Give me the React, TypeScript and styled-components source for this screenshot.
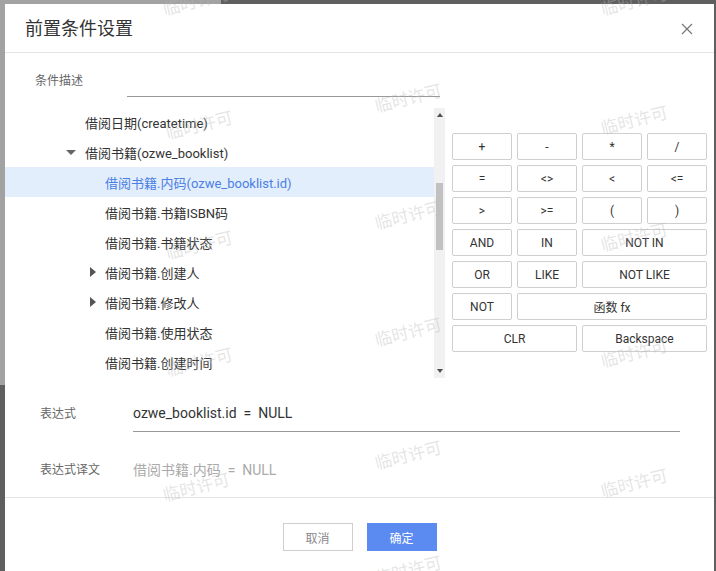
import React from "react";
import styled, { createGlobalStyle } from "styled-components";

const Global = createGlobalStyle`
  html, body { margin: 0; padding: 0; }
  body {
    width: 716px;
    height: 571px;
    overflow: hidden;
    font-family: Roboto, "Noto Sans CJK SC", sans-serif;
  }
`;

const Backdrop = styled.div`
  position: relative;
  width: 716px;
  height: 571px;
  overflow: hidden;
  background:
    linear-gradient(#a2a2a2, #a2a2a2) no-repeat 0 0 / 221px 385px,
    #5f5f5f;
  padding: 4px 2px 0 5px;
  box-sizing: border-box;
`;

const Dialog = styled.div`
  background: #fff;
  height: 600px;
  display: flex;
  flex-direction: column;
`;

const Header = styled.div`
  height: 48px;
  border-bottom: 1px solid #e4e4e4;
  display: flex;
  align-items: center;
  justify-content: space-between;
  padding: 0 20px 0 20px;
`;

const Title = styled.div`
  font-size: 18px;
  color: #333;
  line-height: 24px;
  padding-top: 2px;
`;

const CloseBtn = styled.div`
  width: 14px;
  height: 14px;
  display: flex;
  align-items: center;
  justify-content: center;
  margin-top: 2px;
`;

const DescRow = styled.div`
  display: flex;
  align-items: flex-start;
  padding: 20px 0 0 30px;
  margin-bottom: 10px;
`;

const Label = styled.div<{ $w: number }>`
  width: ${(p) => p.$w}px;
  font-size: 12px;
  color: #666;
  line-height: 16px;
`;

const DescInput = styled.div`
  width: 313px;
  height: 23px;
  border-bottom: 1px solid #999;
`;

const Main = styled.div`
  display: flex;
  height: 271px;
`;

const Tree = styled.div`
  width: 440px;
  height: 271px;
  display: flex;
  overflow: hidden;
`;

const TreeRows = styled.div`
  width: 429px;
  display: flex;
  flex-direction: column;
`;

const Row = styled.div<{ $level: number; $selected?: boolean }>`
  height: 30px;
  flex: none;
  display: flex;
  align-items: center;
  padding-left: ${(p) => 60 + (p.$level - 1) * 20}px;
  background: ${(p) => (p.$selected ? "#e3eefd" : "transparent")};
  color: ${(p) => (p.$selected ? "#4a7fe4" : "#333")};
  font-size: 13px;
  white-space: nowrap;
`;

const Toggle = styled.span`
  width: 20px;
  height: 30px;
  flex: none;
  display: flex;
  align-items: center;
`;

const Down = styled.span`
  margin-left: 1px;
  width: 0;
  height: 0;
  border-left: 5px solid transparent;
  border-right: 5px solid transparent;
  border-top: 5px solid #666;
  margin-top: 1px;
`;

const Right = styled.span`
  margin-left: 5px;
  width: 0;
  height: 0;
  border-top: 5px solid transparent;
  border-bottom: 5px solid transparent;
  border-left: 6px solid #555;
`;

const Scrollbar = styled.div`
  width: 11px;
  height: 270px;
  margin-top: 1px;
  background: #f1f1f1;
  display: flex;
  flex-direction: column;
  align-items: center;
  justify-content: space-between;
  padding: 5px 0 5px;
  box-sizing: border-box;
`;

const ArrowUp = styled.span`
  width: 0;
  height: 0;
  border-left: 3.5px solid transparent;
  border-right: 3.5px solid transparent;
  border-bottom: 4px solid #505050;
`;

const ArrowDown = styled.span`
  width: 0;
  height: 0;
  border-left: 3.5px solid transparent;
  border-right: 3.5px solid transparent;
  border-top: 4px solid #505050;
`;

const Track = styled.div`
  flex: 1;
  width: 100%;
  display: flex;
  justify-content: center;
  padding-top: 66px;
`;

const Thumb = styled.div`
  width: 7px;
  height: 67px;
  background: #c1c1c1;
`;

const KeyPad = styled.div`
  padding: 26px 0 0 7px;
  display: grid;
  grid-template-columns: repeat(4, 60px);
  grid-auto-rows: 27px;
  gap: 5px;
  align-content: start;
`;

const Key = styled.div<{ $span?: number }>`
  grid-column: span ${(p) => p.$span ?? 1};
  border: 1px solid #cfcfcf;
  border-radius: 2px;
  display: flex;
  align-items: center;
  justify-content: center;
  font-size: 12px;
  color: #333;
  background: #fff;
  white-space: pre;
`;

const FieldRow = styled.div<{ $mt: number }>`
  display: flex;
  align-items: center;
  padding-left: 35px;
  margin-top: ${(p) => p.$mt}px;
`;

const ExprInput = styled.div`
  width: 547px;
  height: 36px;
  line-height: 37px;
  border-bottom: 1px solid #999;
  font-size: 14px;
  color: #333;
  white-space: pre;
`;

const Translation = styled.div`
  height: 36px;
  line-height: 36px;
  font-size: 14px;
  color: #aaa;
  white-space: pre;
`;

const Footer = styled.div`
  margin-top: 9px;
  border-top: 1px solid #e4e4e4;
  padding-top: 25px;
  display: flex;
  justify-content: center;
  gap: 14px;
`;

const Btn = styled.div<{ $primary?: boolean }>`
  width: 70px;
  height: 28px;
  box-sizing: border-box;
  display: flex;
  align-items: center;
  justify-content: center;
  font-size: 12px;
  border: 1px solid ${(p) => (p.$primary ? "#5b8af1" : "#cfcfcf")};
  background: ${(p) => (p.$primary ? "#5b8af1" : "#fff")};
  color: ${(p) => (p.$primary ? "#fff" : "#888")};
`;

const Watermarks = styled.div`
  position: absolute;
  inset: 0;
  pointer-events: none;
`;

const Mark = styled.span`
  position: absolute;
  font-size: 17px;
  color: rgba(185, 185, 185, 0.38);
  transform: rotate(-14deg);
  transform-origin: left top;
  white-space: nowrap;
  font-family: "Noto Sans CJK SC", sans-serif;
`;

const treeItems: { level: number; text: string; toggle?: "down" | "right"; selected?: boolean }[] = [
  { level: 1, text: "借阅日期(createtime)" },
  { level: 1, text: "借阅书籍(ozwe_booklist)", toggle: "down" },
  { level: 2, text: "借阅书籍.内码(ozwe_booklist.id)", selected: true },
  { level: 2, text: "借阅书籍.书籍ISBN码" },
  { level: 2, text: "借阅书籍.书籍状态" },
  { level: 2, text: "借阅书籍.创建人", toggle: "right" },
  { level: 2, text: "借阅书籍.修改人", toggle: "right" },
  { level: 2, text: "借阅书籍.使用状态" },
  { level: 2, text: "借阅书籍.创建时间" },
];

const keys: { label: string; span?: number }[] = [
  { label: "+" }, { label: "-" }, { label: "*" }, { label: "/" },
  { label: "=" }, { label: "<>" }, { label: "<" }, { label: "<=" },
  { label: ">" }, { label: ">=" }, { label: "(" }, { label: ")" },
  { label: "AND" }, { label: "IN" }, { label: "NOT IN", span: 2 },
  { label: "OR" }, { label: "LIKE" }, { label: "NOT LIKE", span: 2 },
  { label: "NOT" }, { label: "函数 fx", span: 3 },
  { label: "CLR", span: 2 }, { label: "Backspace", span: 2 },
];

const marks: [number, number][] = [
  [160, -4], [598, -4],
  [372, 93], [163, 120], [598, 115],
  [372, 210], [163, 240], [598, 232],
  [372, 327], [163, 357], [598, 348],
  [372, 450], [160, 482], [598, 478],
  [372, 565],
];

export default function App() {
  return (
    <>
      <Global />
      <Backdrop>
        <Dialog>
          <Header>
            <Title>前置条件设置</Title>
            <CloseBtn>
              <svg width="12" height="12" viewBox="0 0 12 12">
                <path d="M1 1L11 11M11 1L1 11" stroke="#777" strokeWidth="1.2" fill="none" />
              </svg>
            </CloseBtn>
          </Header>
          <DescRow>
            <Label $w={92}>条件描述</Label>
            <DescInput />
          </DescRow>
          <Main>
            <Tree>
              <TreeRows>
                {treeItems.map((it, i) => (
                  <Row key={i} $level={it.level} $selected={it.selected}>
                    <Toggle>
                      {it.toggle === "down" && <Down />}
                      {it.toggle === "right" && <Right />}
                    </Toggle>
                    {it.text}
                  </Row>
                ))}
              </TreeRows>
              <Scrollbar>
                <ArrowUp />
                <Track>
                  <Thumb />
                </Track>
                <ArrowDown />
              </Scrollbar>
            </Tree>
            <KeyPad>
              {keys.map((k, i) => (
                <Key key={i} $span={k.span}>
                  {k.label}
                </Key>
              ))}
            </KeyPad>
          </Main>
          <FieldRow $mt={17}>
            <Label $w={93}>表达式</Label>
            <ExprInput>{"ozwe_booklist.id  =  NULL"}</ExprInput>
          </FieldRow>
          <FieldRow $mt={20}>
            <Label $w={93}>表达式译文</Label>
            <Translation>{"借阅书籍.内码  =  NULL"}</Translation>
          </FieldRow>
          <Footer>
            <Btn>取消</Btn>
            <Btn $primary>确定</Btn>
          </Footer>
        </Dialog>
        <Watermarks>
          {marks.map(([x, y], i) => (
            <Mark key={i} style={{ left: x, top: y }}>
              临时许可
            </Mark>
          ))}
        </Watermarks>
      </Backdrop>
    </>
  );
}
